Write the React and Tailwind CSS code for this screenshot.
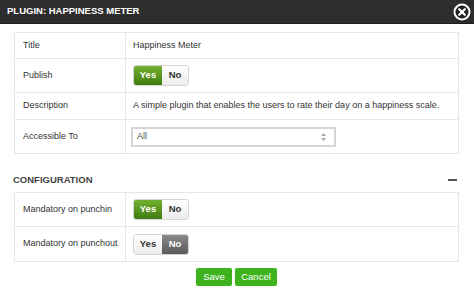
const Toggle = ({ on }) => (
  <div className="flex h-[21px] rounded-[3px] border border-[#d4d4d4] text-[9.5px] font-bold overflow-hidden">
    <span
      className={
        on
          ? 'w-[28px] flex items-center justify-center text-white bg-gradient-to-b from-[#72b02e] to-[#3f7d12]'
          : 'w-[28px] flex items-center justify-center text-[#333] bg-gradient-to-b from-white to-[#ececec]'
      }
    >
      Yes
    </span>
    <span
      className={
        on
          ? 'w-[26px] flex items-center justify-center text-[#333] bg-gradient-to-b from-white to-[#ececec]'
          : 'w-[26px] flex items-center justify-center text-white bg-gradient-to-b from-[#8a8a8a] to-[#5a5a5a]'
      }
    >
      No
    </span>
  </div>
);

const Row = ({ label, h, children, last }) => (
  <div className={`flex ${h} ${last ? '' : 'border-b border-[#e6e6e6]'}`}>
    <div className="w-[111px] shrink-0 border-r border-[#e6e6e6] flex items-center pl-[8px] text-[#333] whitespace-nowrap">
      {label}
    </div>
    <div className="flex-1 flex items-center pl-[7px] text-[#333] whitespace-nowrap">{children}</div>
  </div>
);

export default function App() {
  return (
    <div
      className="w-[474px] h-[304px] bg-white overflow-hidden text-[9px]"
      style={{ fontFamily: '"Liberation Sans", Arial, sans-serif' }}
    >
      {/* Header */}
      <div className="h-[24px] bg-[#2d2d2d] flex items-center justify-between pl-[7px] pr-[3px] border-b border-[#1e1e1e]">
        <span className="text-white font-bold text-[9.5px]">PLUGIN: HAPPINESS METER</span>
        <svg width="18" height="18" viewBox="0 0 18 18">
          <circle cx="9" cy="9" r="7.5" fill="#222" stroke="#fff" strokeWidth="2" />
          <path d="M6.2 6.2 L11.8 11.8 M11.8 6.2 L6.2 11.8" stroke="#fff" strokeWidth="2.2" strokeLinecap="round" />
        </svg>
      </div>

      <div className="pl-[14px] pr-[15px] pt-[8px]">
        <div className="border border-[#e6e6e6]">
          <Row label="Title" h="h-[26px]">Happiness Meter</Row>
          <Row label="Publish" h="h-[34px]">
            <Toggle on />
          </Row>
          <Row label="Description" h="h-[27px]">
            A simple plugin that enables the users to rate their day on a happiness scale.
          </Row>
          <Row label="Accessible To" h="h-[33px]" last>
            <div className="ml-[-2px] w-[205px] h-[20px] border-2 border-[#d6d6d6] flex items-center justify-between pl-[4px] pr-[8px] text-[#555]">
              <span>All</span>
              <svg width="5" height="8" viewBox="0 0 5 8">
                <path d="M0 3 L2.5 0 L5 3 Z M0 5 L2.5 8 L5 5 Z" fill="#aaa" />
              </svg>
            </div>
          </Row>
        </div>

        <div className="flex items-center justify-between mt-[19px] h-[14px]">
          <span className="font-bold text-[#444] text-[9.5px] ml-[-1px]">CONFIGURATION</span>
          <span className="w-[9px] h-[2px] bg-[#555] mr-[2px]" />
        </div>

        <div className="border border-[#e6e6e6] mt-[5px]">
          <Row label="Mandatory on punchin" h="h-[34px]">
            <Toggle on />
          </Row>
          <Row label="Mandatory on punchout" h="h-[34px]" last>
            <Toggle />
          </Row>
        </div>

        <div className="flex justify-center gap-[3px] mt-[6px]">
          <button className="w-[36px] h-[18px] rounded-[2px] bg-[#3db41e] text-white text-[9.5px]">Save</button>
          <button className="w-[42px] h-[18px] rounded-[2px] bg-[#3db41e] text-white text-[9.5px]">Cancel</button>
        </div>
      </div>
    </div>
  );
}
